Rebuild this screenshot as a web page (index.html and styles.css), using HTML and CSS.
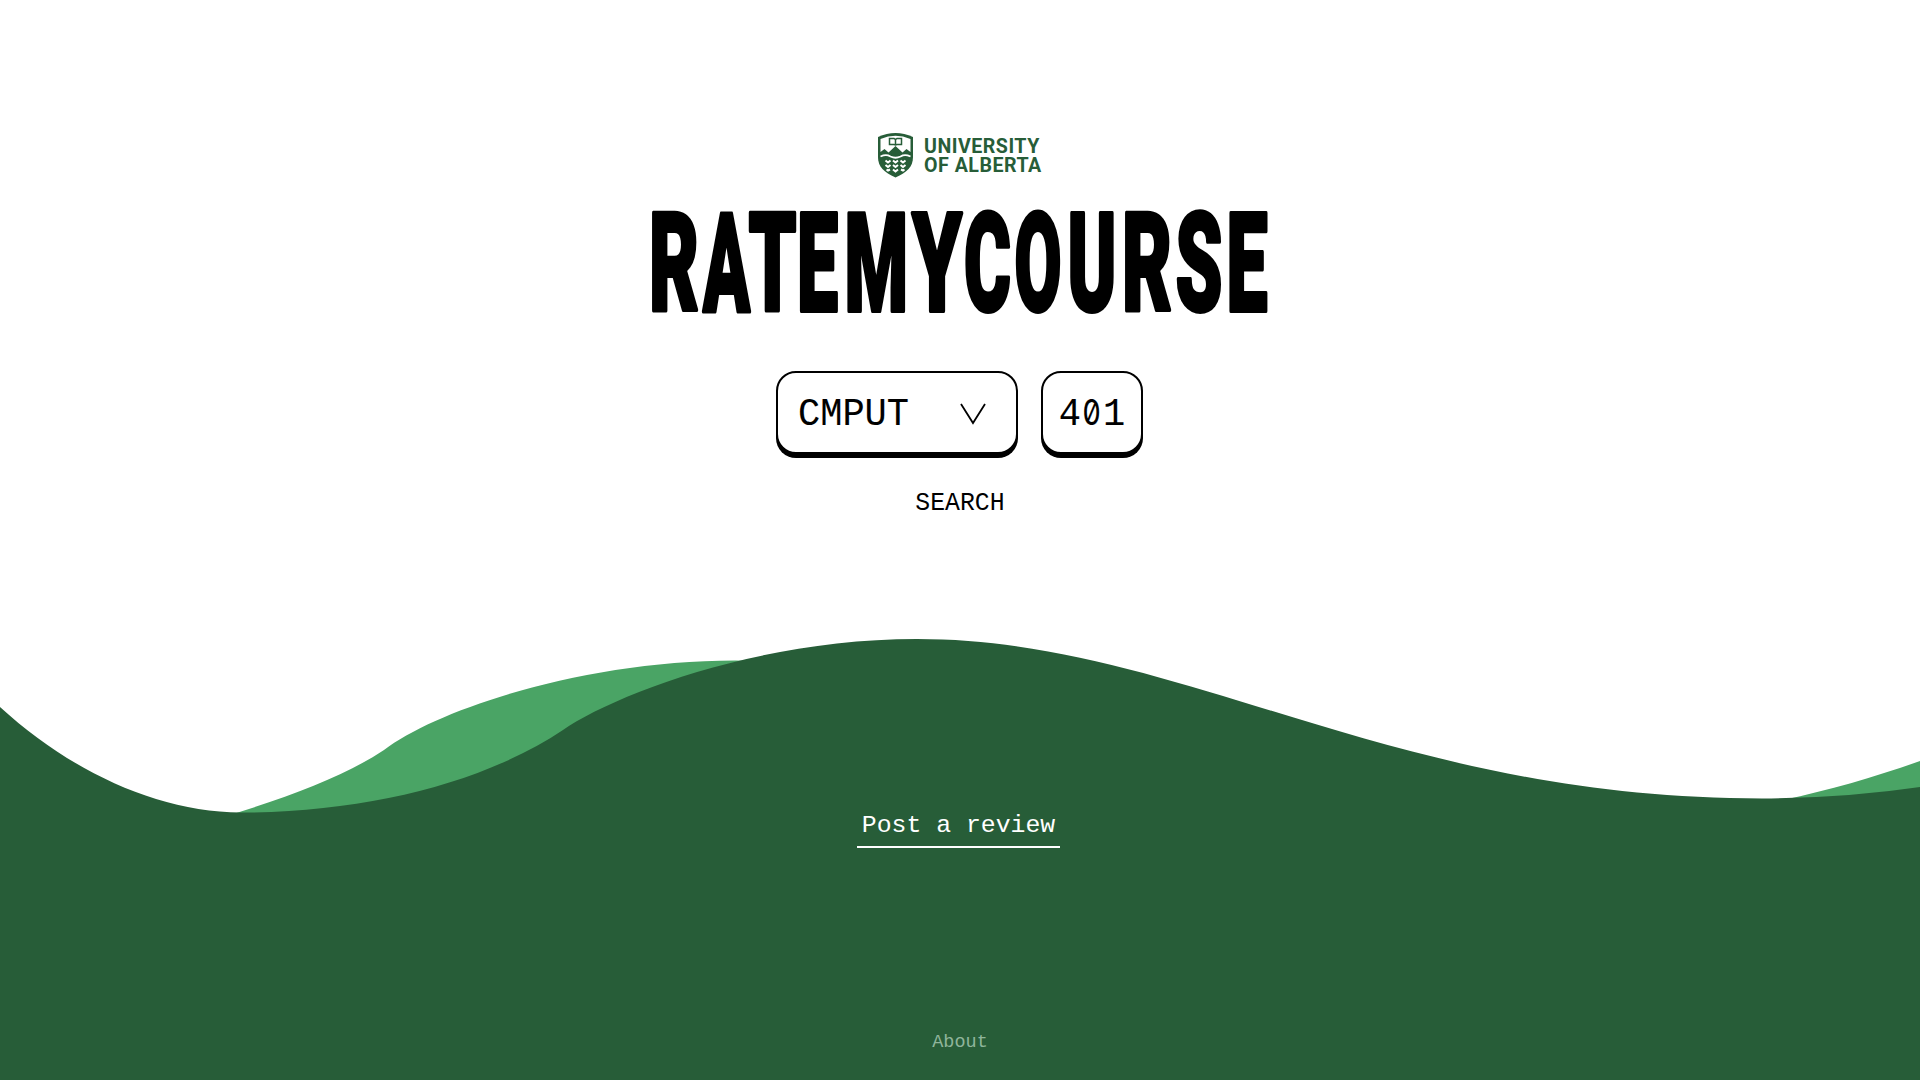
FILE: index.html
```html
<!DOCTYPE html>
<html lang="en">
<head>
<meta charset="utf-8">
<title>RateMyCourse</title>
<link rel="stylesheet" href="styles.css">
</head>
<body>
<svg class="waves" viewBox="0 0 1920 1080" aria-hidden="true">
  <path class="wave-light" d="M190 827C272 803 337 781 384 750C438 709 585 660.5 735 660.5L760 661L1100 800H1783C1830 790 1875 777 1920 761V900H190Z"/>
  <path class="wave-dark" d="M0 707C70 771 157 812 241 812.6C370 812 485 782 563 730C610 697 755 639 917 639C1182 639 1385 798.5 1762 798.5Q1846 798 1920 787V1080H0Z"/>
</svg>
<main class="page">
  <header class="brand">
    <svg class="shield" viewBox="0 0 35 45" aria-hidden="true">
      <path class="green" d="M0 4Q17.500-4 35 4V24C35 34 29 39 17.500 44.500C6 39 0 34 0 24Z"/>
      <path class="white" d="M2.500 6Q17.500-.5 32.500 6V19L28.500 16L24.500 19.500L17.500 13L10.500 19.500L6.500 16L2.500 19Z"/>
      <path class="white-line" d="M2.500 23.500C7 21.500 9 21.500 12.500 23.500Q17.500 26 22.500 23.500C26 21.500 28 21.500 32.500 23.500"/>
      <path class="book" d="M11.500 5.500H16L17.500 6.500L19 5.500H23.500V11.500H19L17.500 12L16 11.500H11.500ZM17.500 6.500V12"/>
      <path class="wheat" d="M7.500 27.500L10 29.500L12.500 27.500M7.500 32L10 34L12.500 32M8.500 36.500L10 37.500L12 36.500M15 27.500L17.500 29.500L20 27.500M15 32L17.500 34L20 32M15 36.500L17.500 38.500L20 36.500M22.500 27.500L25 29.500L27.500 27.500M22.500 32L25 34L27.500 32M23 36.500L25 37.500L26.500 36.500"/>
    </svg>
    <div class="brand-name">UNIVERSITY<br>OF ALBERTA</div>
  </header>
  <h1 class="title">
    <svg class="wordmark" viewBox="0 0 640 120">
      <text class="wordmark-text" y="108"><tspan x="9" textLength="50" lengthAdjust="spacingAndGlyphs">R</tspan><tspan x="63" textLength="47" lengthAdjust="spacingAndGlyphs">A</tspan><tspan x="108.5" textLength="48" lengthAdjust="spacingAndGlyphs">T</tspan><tspan x="157" textLength="41" lengthAdjust="spacingAndGlyphs">E</tspan><tspan x="204.500" textLength="63.500" lengthAdjust="spacingAndGlyphs">M</tspan><tspan x="272" textLength="50" lengthAdjust="spacingAndGlyphs">Y</tspan><tspan x="324" textLength="47" lengthAdjust="spacingAndGlyphs">C</tspan><tspan x="374.5" textLength="47" lengthAdjust="spacingAndGlyphs">O</tspan><tspan x="427.5" textLength="49" lengthAdjust="spacingAndGlyphs">U</tspan><tspan x="482" textLength="50" lengthAdjust="spacingAndGlyphs">R</tspan><tspan x="535.5" textLength="47" lengthAdjust="spacingAndGlyphs">S</tspan><tspan x="586.5" textLength="41" lengthAdjust="spacingAndGlyphs">E</tspan></text>
    </svg>
  </h1>
  <form class="course">
    <div class="field subject"><span class="value">CMPUT</span>
      <svg class="chevron" viewBox="0 0 26 22" aria-hidden="true"><path d="M1 1L13 20L25 1"/></svg>
    </div>
    <div class="field number"><span class="value">4<span class="zero">0</span>1</span></div>
  </form>
  <a class="search">SEARCH</a>
  <a class="review">Post a review</a>
  <footer class="footer"><a class="about">About</a></footer>
</main>
</body>
</html>
```
FILE: styles.css
```css
* { box-sizing: border-box; }
body { margin: 0; background: #fff; color: #000; font-family: "Liberation Mono", monospace; overflow: hidden; }
.waves { position: absolute; inset: 0; width: 100%; height: 100%; z-index: -1; }
.wave-light { fill: #4aa465; }
.wave-dark { fill: #275d38; }
.page { height: 1080px; display: flex; flex-direction: column; align-items: center; }
.brand { display: flex; gap: 11px; height: 45px; margin-top: 133px; width: 164px; }
.shield { width: 35px; height: 45px; flex: none; }
.green { fill: #275d38; }
.white { fill: #fff; }
.white-line { fill: none; stroke: #fff; stroke-width: 1.800; }
.book { fill: #fff; stroke: #275d38; stroke-width: 1.500; }
.wheat { fill: none; stroke: #fff; stroke-width: 2; }
.brand-name { font: 700 19.600px/19px Roboto, sans-serif; letter-spacing: .5px; color: #275d38; padding-top: 3.500px; white-space: nowrap; }
.title { margin: 25px 0 0; width: 640px; height: 120px; line-height: 0; }
.wordmark { width: 640px; height: 120px; overflow: visible; }
.wordmark-text { font: 900 138px Roboto, sans-serif; stroke: #000; stroke-width: 4; stroke-linejoin: round; }
.course { display: flex; gap: 23px; margin-top: 48px; padding-right: 1px; }
.field { height: 83px; margin-bottom: 4px; border: 2px solid #000; border-radius: 20px; box-shadow: 0 4px 0 #000; background: #fff; font-size: 37px; line-height: 44px; display: flex; align-items: center; }
.subject { width: 242px; padding: 3px 30px 0 20px; justify-content: space-between; }
.number { width: 102px; justify-content: center; padding-top: 3px; }
.value { -webkit-text-stroke: .1px #000; transform: scaleY(1.060); }
.zero { display: inline-block; font-family: Inter, sans-serif; font-feature-settings: "zero" 1; font-size: 34px; line-height: 36px; width: 22px; text-align: center; text-indent: -1px; transform: scaleX(.85); }
.chevron { width: 26px; height: 22px; fill: none; stroke: #000; stroke-width: 1.800; }
.search { margin-top: 31px; font-size: 24.800px; line-height: 28px; transform: scaleY(1.060); }
.review { width: 203px; height: 41px; margin: 290px 3px 0 0; border-bottom: 2px solid #fff; color: #fff; font-size: 24.800px; line-height: 36px; text-align: center; white-space: nowrap; }
.footer { margin-top: auto; padding-bottom: 25px; }
.about { display: block; font-size: 18.500px; line-height: 24px; color: #8fb59b; }
```
